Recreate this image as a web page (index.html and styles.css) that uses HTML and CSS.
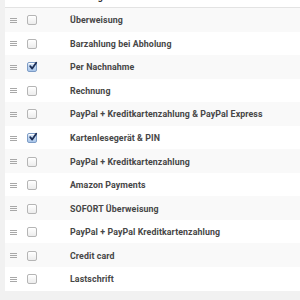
FILE: index.html
```html
<!DOCTYPE html>
<html lang="de">
<head>
<meta charset="utf-8">
<link rel="stylesheet" href="styles.css">
</head>
<body>
<div class="page">
  <div class="table">
    <div class="head">
      <span class="h-handle"></span>
      <span class="h-active">Aktiviert</span>
      <span class="h-name">Zahlungsart</span>
    </div>
    <div class="row alt"><span class="handle"><i></i><i></i><i></i></span><span class="cbcell"><span class="cb"></span></span><span class="name">Überweisung</span></div>
    <div class="row"><span class="handle"><i></i><i></i><i></i></span><span class="cbcell"><span class="cb"></span></span><span class="name">Barzahlung bei Abholung</span></div>
    <div class="row alt"><span class="handle"><i></i><i></i><i></i></span><span class="cbcell"><span class="cb on"><svg viewBox="0 0 10 10" width="10" height="10"><path d="M2.2 5.2 L4.2 7.6 L8.2 1.8" fill="none" stroke="#1d2f56" stroke-width="1.8" stroke-linecap="round" stroke-linejoin="round"/></svg></span></span><span class="name">Per Nachnahme</span></div>
    <div class="row"><span class="handle"><i></i><i></i><i></i></span><span class="cbcell"><span class="cb"></span></span><span class="name">Rechnung</span></div>
    <div class="row alt"><span class="handle"><i></i><i></i><i></i></span><span class="cbcell"><span class="cb"></span></span><span class="name">PayPal + Kreditkartenzahlung &amp; PayPal Express</span></div>
    <div class="row"><span class="handle"><i></i><i></i><i></i></span><span class="cbcell"><span class="cb on"><svg viewBox="0 0 10 10" width="10" height="10"><path d="M2.2 5.2 L4.2 7.6 L8.2 1.8" fill="none" stroke="#1d2f56" stroke-width="1.8" stroke-linecap="round" stroke-linejoin="round"/></svg></span></span><span class="name">Kartenlesegerät &amp; PIN</span></div>
    <div class="row alt"><span class="handle"><i></i><i></i><i></i></span><span class="cbcell"><span class="cb"></span></span><span class="name">PayPal + Kreditkartenzahlung</span></div>
    <div class="row"><span class="handle"><i></i><i></i><i></i></span><span class="cbcell"><span class="cb"></span></span><span class="name">Amazon Payments</span></div>
    <div class="row alt"><span class="handle"><i></i><i></i><i></i></span><span class="cbcell"><span class="cb"></span></span><span class="name">SOFORT Überweisung</span></div>
    <div class="row"><span class="handle"><i></i><i></i><i></i></span><span class="cbcell"><span class="cb"></span></span><span class="name">PayPal + PayPal Kreditkartenzahlung</span></div>
    <div class="row alt"><span class="handle"><i></i><i></i><i></i></span><span class="cbcell"><span class="cb"></span></span><span class="name">Credit card</span></div>
    <div class="row"><span class="handle"><i></i><i></i><i></i></span><span class="cbcell"><span class="cb"></span></span><span class="name">Lastschrift</span></div>
  </div>
</div>
</body>
</html>
```
FILE: styles.css
```css
html, body {
  margin: 0;
  padding: 0;
  background: #fff;
  overflow: hidden;
}
.page {
  width: 300px;
  height: 300px;
  overflow: hidden;
  background: #f1f1f1;
  padding-left: 5px;
  box-sizing: border-box;
}
.table {
  background: #fff;
  margin-top: -15px;
  font-family: Roboto, "Liberation Sans", sans-serif;
  font-weight: bold;
  font-size: 8.8px;
  letter-spacing: 0.1px;
  color: #464646;
}
.head {
  display: flex;
  align-items: flex-end;
  height: 23px;
  padding-bottom: 5px;
  box-sizing: border-box;
  border-bottom: 1px solid #e3e3e3;
  color: #333;
}
.h-handle { width: 16px; }
.h-active { width: 42px; text-align: right; }
.h-name { margin-left: 7px; }
.row {
  display: flex;
  align-items: center;
  height: 23.55px;
  padding-top: 1px;
  box-sizing: border-box;
}
.row.alt { background: #f9f9f9; }
.handle {
  width: 12px;
  display: flex;
  flex-direction: column;
  align-items: flex-end;
  gap: 1px;
}
.handle i {
  display: block;
  width: 7px;
  height: 1px;
  background: #a8a8a8;
}
.cbcell {
  width: 53px;
  display: flex;
  padding-left: 10px;
  box-sizing: border-box;
}
.cb {
  width: 8px;
  height: 8px;
  border: 1px solid #b5b5b5;
  border-radius: 2px;
  background: linear-gradient(#ffffff, #ececec);
  box-shadow: inset 0 1px 0 #fff;
  position: relative;
}
.cb.on {
  background: linear-gradient(#d8e6f7, #a9c6ea);
  border-color: #7d9cc6;
}
.cb svg {
  position: absolute;
  left: 0;
  top: -2px;
}
.name { white-space: nowrap; }
```
